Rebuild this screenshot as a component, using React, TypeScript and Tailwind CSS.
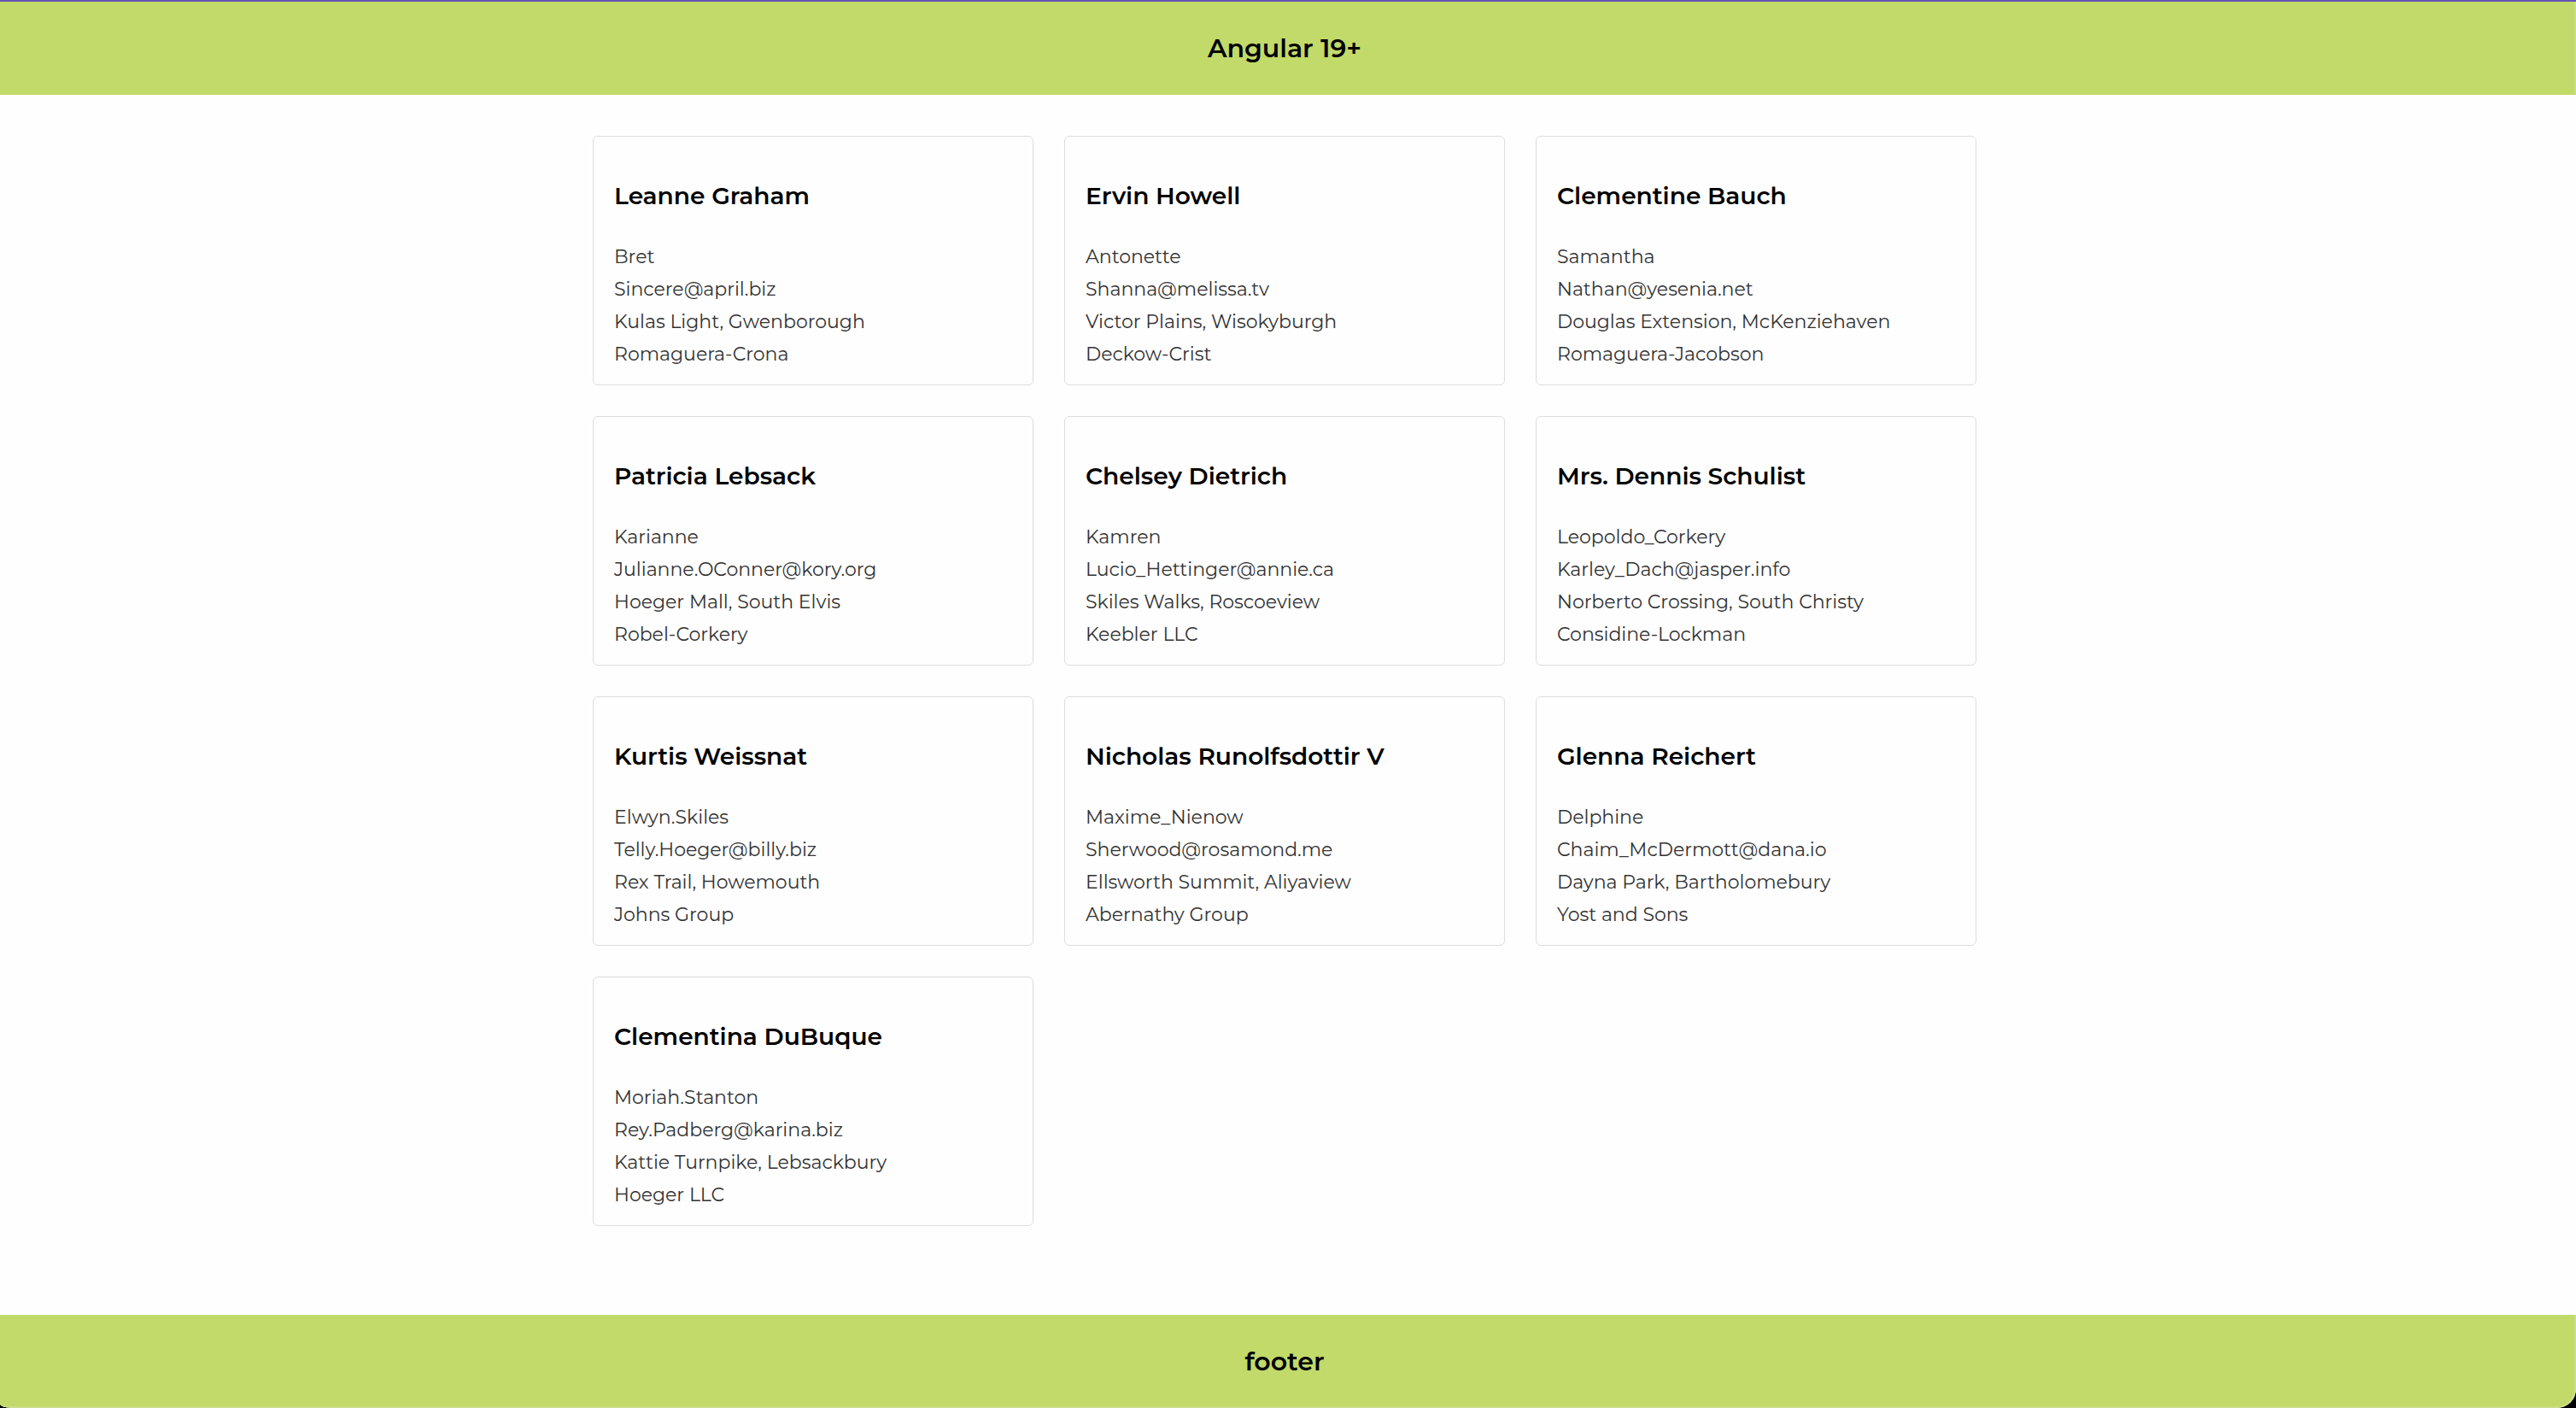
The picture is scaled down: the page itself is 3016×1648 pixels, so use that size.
const users = [
  ["Leanne Graham", "Bret", "Sincere@april.biz", "Kulas Light, Gwenborough", "Romaguera-Crona"],
  ["Ervin Howell", "Antonette", "Shanna@melissa.tv", "Victor Plains, Wisokyburgh", "Deckow-Crist"],
  ["Clementine Bauch", "Samantha", "Nathan@yesenia.net", "Douglas Extension, McKenziehaven", "Romaguera-Jacobson"],
  ["Patricia Lebsack", "Karianne", "Julianne.OConner@kory.org", "Hoeger Mall, South Elvis", "Robel-Corkery"],
  ["Chelsey Dietrich", "Kamren", "Lucio_Hettinger@annie.ca", "Skiles Walks, Roscoeview", "Keebler LLC"],
  ["Mrs. Dennis Schulist", "Leopoldo_Corkery", "Karley_Dach@jasper.info", "Norberto Crossing, South Christy", "Considine-Lockman"],
  ["Kurtis Weissnat", "Elwyn.Skiles", "Telly.Hoeger@billy.biz", "Rex Trail, Howemouth", "Johns Group"],
  ["Nicholas Runolfsdottir V", "Maxime_Nienow", "Sherwood@rosamond.me", "Ellsworth Summit, Aliyaview", "Abernathy Group"],
  ["Glenna Reichert", "Delphine", "Chaim_McDermott@dana.io", "Dayna Park, Bartholomebury", "Yost and Sons"],
  ["Clementina DuBuque", "Moriah.Stanton", "Rey.Padberg@karina.biz", "Kattie Turnpike, Lebsackbury", "Hoeger LLC"],
];

function UserCard({ user }: { user: string[] }) {
  const [name, ...details] = user;
  return (
    <li className="rounded-md border border-[#dddddd] px-6 pt-12 pb-4">
      <h2 className="text-[28px] leading-[42px] font-semibold text-black">{name}</h2>
      <div className="mt-8 text-[22px] leading-[38px] text-[#333333]">
        {details.map((line) => (
          <p key={line}>{line}</p>
        ))}
      </div>
    </li>
  );
}

export default function App() {
  return (
    <div className="min-h-screen bg-black font-['Montserrat',Inter,sans-serif] text-black">
      <div className="flex min-h-screen flex-col overflow-hidden rounded-br-[22px] rounded-bl-[14px_5px] bg-[#fefefe]">
        <div className="h-0.5 bg-[#6552b5]" />
        <header className="border-r-2 border-[#c9de80] bg-[#c2da69] py-[34px] pr-1.5 text-center">
          <h1 className="text-[30px] leading-[41px] font-semibold">Angular 19+</h1>
        </header>
        <main className="flex-1 pt-12 pr-2 pb-12">
          <ul className="mx-auto grid max-w-[1620px] grid-cols-3 gap-9">
            {users.map((user) => (
              <UserCard key={user[0]} user={user} />
            ))}
          </ul>
        </main>
        <footer className="rounded-br-[22px] border-r-2 border-b-2 border-[#cbde86] bg-[#c2da69] pt-[34px] pr-1.5 pb-8 text-center">
          <p className="text-[30px] leading-[41px] font-semibold">footer</p>
        </footer>
      </div>
    </div>
  );
}
